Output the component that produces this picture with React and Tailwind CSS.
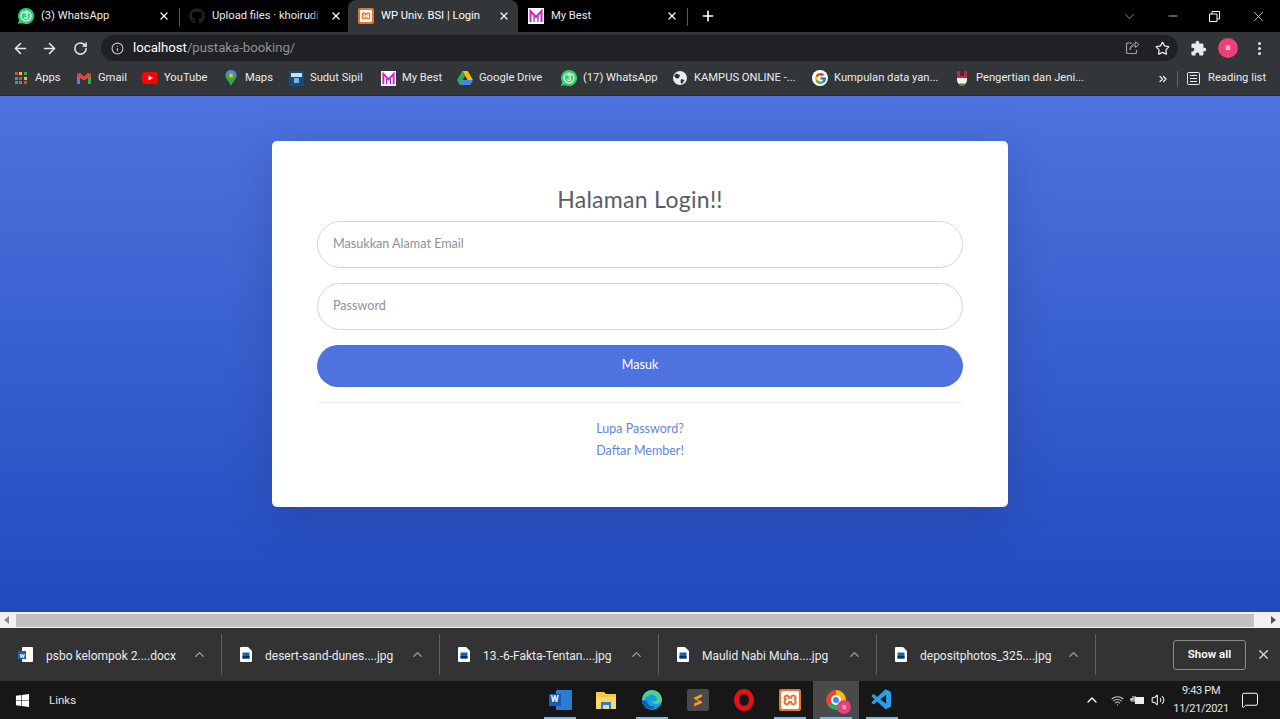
import { ArrowLeft, ArrowRight, RotateCw, Info, Star, X, Plus, ChevronDown, ChevronUp, Minus, ChevronsRight, Wifi, Volume2, MessageSquare } from "lucide-react";
import { FaGithub, FaWindows } from "react-icons/fa";
import { FcGoogle } from "react-icons/fc";
import { MdExtension } from "react-icons/md";
import { SiXampp } from "react-icons/si";
import { VscVscode } from "react-icons/vsc";

function WhatsappIcon({ label = "3" }) {
  return (
    <svg width="16" height="16" viewBox="0 0 16 16" className="shrink-0">
      <path d="M8 0a8 8 0 1 1-4 14.900L0 16l1.100-4A8 8 0 0 1 8 0" fill="#25d366" />
      <circle cx="8" cy="8" r="5" fill="none" stroke="#fff" strokeWidth="1.200" />
      <text x="8" y="11" textAnchor="middle" fontSize="8.500" fontWeight="700" fill="#fff">{label}</text>
    </svg>
  );
}

function XamppIcon({ size = 16 }) {
  return (
    <span className="flex shrink-0 items-center justify-center rounded-[2px] bg-[#e5762f] text-white" style={{ width: size, height: size }}>
      <SiXampp size={size - 4} />
    </span>
  );
}

function MyBestIcon({ size = 16 }) {
  return (
    <svg width={size} height={size} viewBox="0 0 16 16" className="shrink-0">
      <rect width="16" height="16" fill="#fff" />
      <path d="M2.500 14V3L8 9l5.500-6v11" fill="none" stroke="#d81fc4" strokeWidth="2" />
      <path d="M6 14V8M10 14V8" stroke="#7b2cbf" strokeWidth="1.200" />
    </svg>
  );
}

function FileIcon() {
  return (
    <svg width="12" height="15" viewBox="0 0 12 15" className="shrink-0">
      <path d="M0 1a1 1 0 0 1 1-1h7l4 4v10a1 1 0 0 1-1 1H1a1 1 0 0 1-1-1z" fill="#fff" />
      <rect x="2.500" y="5.500" width="7" height="6" fill="#1a62b8" />
      <rect x="2.500" y="9" width="7" height="2.500" fill="#0b2f6b" />
    </svg>
  );
}

function AppsIcon() {
  const colors = ["#ea4335", "#fbbc05", "#34a853", "#4285f4", "#ea4335", "#fbbc05", "#34a853", "#4285f4", "#ea4335"];
  return (
    <span className="grid h-3 w-3 shrink-0 grid-cols-3 gap-[1px]">
      {colors.map((c, i) => (
        <span key={i} className="h-[3px] w-[3px]" style={{ background: c }} />
      ))}
    </span>
  );
}

const bookmarks = [
  { label: "Apps", icon: <AppsIcon />, w: "w-[63px]" },
  {
    label: "Gmail",
    w: "w-[66px]",
    icon: (
      <svg width="14" height="12" viewBox="0 0 14 12" className="shrink-0">
        <path d="M0 2v10h3V5z" fill="#4285f4" />
        <path d="M14 2v10h-3V5z" fill="#34a853" />
        <path d="M0 1.500 3 1l4 3.500L11 1l3 .5V4L7 8.500 0 4z" fill="#ea4335" />
      </svg>
    ),
  },
  {
    label: "YouTube",
    w: "w-[81px]",
    icon: (
      <svg width="16" height="12" viewBox="0 0 16 12" className="shrink-0">
        <rect width="16" height="12" rx="3" fill="#f00" />
        <path d="M6.500 3.500v5L11 6z" fill="#fff" />
      </svg>
    ),
  },
  {
    label: "Maps",
    w: "w-[65px]",
    icon: (
      <svg width="12" height="16" viewBox="0 0 12 16" className="shrink-0">
        <path d="M6 0a5.500 5.500 0 0 0-5.500 5.500C.5 9 4.500 12 6 16c1.500-4 5.500-7 5.500-10.500A5.500 5.500 0 0 0 6 0" fill="#34a853" />
        <path d="M6 0a5.500 5.500 0 0 1 5.500 5.500L1 4A5.500 5.500 0 0 1 6 0" fill="#4285f4" />
        <circle cx="6" cy="5.500" r="2" fill="#fbbc05" />
      </svg>
    ),
  },
  {
    label: "Sudut Sipil",
    w: "w-[92px]",
    icon: (
      <svg width="15" height="15" viewBox="0 0 15 15" className="shrink-0">
        <rect width="15" height="15" fill="#0f4c8a" />
        <rect x="2" y="2" width="11" height="4" fill="#cfe0ee" />
        <rect x="5" y="7" width="5" height="5" fill="#7fb2d8" />
      </svg>
    ),
  },
  { label: "My Best", icon: <MyBestIcon size={15} />, w: "w-[77px]" },
  {
    label: "Google Drive",
    w: "w-[104px]",
    icon: (
      <svg width="16" height="14" viewBox="0 0 16 14" className="shrink-0">
        <path d="M5.300 0h5.400l5.300 9h-5.400z" fill="#fbbc05" />
        <path d="M5.300 0 0 9l2.700 5 5.300-9z" fill="#34a853" />
        <path d="M5.300 9H16l-2.700 5H2.700z" fill="#4285f4" />
      </svg>
    ),
  },
  { label: "(17) WhatsApp", icon: <WhatsappIcon />, w: "w-[111px]" },
  {
    label: "KAMPUS ONLINE -...",
    w: "w-[140px]",
    icon: (
      <svg width="14" height="14" viewBox="0 0 14 14" className="shrink-0">
        <circle cx="7" cy="7" r="7" fill="#e8eaed" />
        <path d="M3 2.500 7 4 6 7 3.500 7.500 1 5zM8 8l3.500 1L9 13 7.500 11z" fill="#303134" />
      </svg>
    ),
  },
  { label: "Kumpulan data yan...", icon: <span className="flex h-4 w-4 shrink-0 items-center justify-center rounded-full bg-white"><FcGoogle size={13} /></span>, w: "w-[142px]" },
  {
    label: "Pengertian dan Jeni...",
    w: "w-[203px]",
    icon: (
      <svg width="14" height="15" viewBox="0 0 14 15" className="shrink-0">
        <path d="M2 0h3v5h4V0h3v9a5 5 0 0 1-10 0z" fill="#d81b3c" />
        <path d="M2 7h10v2a5 5 0 0 1-10 0z" fill="#f1f3ef" />
        <path d="M4.500 12.500h5V15h-5z" fill="#3d8b4f" />
      </svg>
    ),
  },
];

const downloads = [
  { name: "psbo kelompok 2....docx", w: "w-[222px]", word: true },
  { name: "desert-sand-dunes....jpg", w: "w-[218px]" },
  { name: "13.-6-Fakta-Tentan....jpg", w: "w-[219px]" },
  { name: "Maulid Nabi Muha....jpg", w: "w-[218px]" },
  { name: "depositphotos_325....jpg", w: "w-[219px]" },
];

function Tab({ icon, title, active, sep, box, fade }) {
  return (
    <div className={`relative flex h-[32px] shrink-0 items-center ${box} ${active ? "rounded-t-lg bg-[#323639] text-white" : "text-[#e8eaed]"}`}>
      {icon}
      <span className="ml-[7px] min-w-0 flex-1 whitespace-nowrap text-[11.2px]">{title}</span>
      {fade && <span className="absolute right-[26px] top-2 h-4 w-3 bg-gradient-to-r from-transparent to-black" />}
      <X size={12} strokeWidth={2.5} className="shrink-0 text-white" />
      {sep && <span className="absolute right-0 top-[8px] h-[18px] w-px bg-[#5a5a5a]" />}
    </div>
  );
}

function TaskIcon({ children, active, open }) {
  return (
    <div className={`relative flex h-[38px] w-[46px] items-center justify-center ${active ? "bg-[#4a4a4a]" : ""}`}>
      {children}
      {open && <span className="absolute bottom-0 left-[7px] h-[2px] w-[32px] bg-[#76b9ed]" />}
    </div>
  );
}

export default function App() {
  return (
    <div className="flex h-[719px] w-[1280px] flex-col overflow-hidden bg-black font-['Roboto',sans-serif]">
      {/* tab strip */}
      <div className="flex h-[32px] shrink-0 items-center bg-black pl-[9px]">
        <Tab box="w-[171px] pl-[9px] pr-[10px]" sep title="(3) WhatsApp" icon={<WhatsappIcon />} />
        <Tab box="w-[168px] pl-[9px] pr-[6px]" fade title="Upload files · khoirudi" icon={<FaGithub size={16} className="shrink-0 text-[#222]" />} />
        <Tab box="w-[170px] pl-[10px] pr-[8px]" active title="WP Univ. BSI | Login" icon={<XamppIcon />} />
        <Tab box="w-[170px] pl-[10px] pr-[10px]" sep title="My Best" icon={<MyBestIcon />} />
        <Plus size={16} strokeWidth={2.5} className="ml-[12px] text-white" />
        <div className="ml-auto flex items-center">
          <ChevronDown size={15} strokeWidth={1} className="mr-[29px] text-[#ddd]" />
          <Minus size={14} strokeWidth={1.2} className="mr-[29px] text-white" />
          <svg width="11" height="11" viewBox="0 0 11 11" className="mr-[30px]">
            <path d="M.5 3h7.500v7.500H.500zM3 3V.5h7.500V8H8" fill="none" stroke="#fff" />
          </svg>
          <X size={17} strokeWidth={1} className="mr-[13px] text-white" />
        </div>
      </div>

      {/* address bar */}
      <div className="flex h-[32px] shrink-0 items-center bg-[#323639] pl-[12px]">
        <ArrowLeft size={17} strokeWidth={2.2} className="text-[#e8eaed]" />
        <ArrowRight size={17} strokeWidth={2.2} className="ml-[12px] text-[#e8eaed]" />
        <RotateCw size={15} strokeWidth={2.4} className="ml-[15px] text-[#e8eaed]" />
        <div className="ml-[13px] flex h-[26px] w-[1077px] items-center rounded-full bg-[#202124] pl-[10px] pr-[8px]">
          <Info size={13} className="text-[#c4c7c5]" />
          <span className="ml-[9px] text-[13.2px] text-white">localhost</span>
          <span className="text-[13.2px] text-[#8f9296]">/pustaka-booking/</span>
          <svg width="15" height="14" viewBox="0 0 15 14" className="ml-auto">
            <path d="M7 2H2.500a1 1 0 0 0-1 1v8.500a1 1 0 0 0 1 1h8a1 1 0 0 0 1-1V9" fill="none" stroke="#9aa0a6" strokeWidth="1.200" />
            <path d="M5 9c.5-3 3-4.500 5.500-4.500V6.500L14 3.500 10.500.8v2C7 2.800 5 5.500 5 9z" fill="none" stroke="#9aa0a6" />
          </svg>
          <Star size={15} className="ml-[15px] text-[#e8eaed]" />
        </div>
        <MdExtension size={17} className="ml-[12px] text-[#e8eaed]" />
        <span className="ml-[11px] flex h-[20px] w-[20px] items-center justify-center rounded-full bg-[#ec407a] text-[9px] font-semibold text-white">a</span>
        <span className="ml-[20px] flex flex-col gap-[2px]">
          <span className="h-[3px] w-[3px] rounded-full bg-[#e8eaed]" />
          <span className="h-[3px] w-[3px] rounded-full bg-[#e8eaed]" />
          <span className="h-[3px] w-[3px] rounded-full bg-[#e8eaed]" />
        </span>
      </div>

      {/* bookmarks */}
      <div className="flex h-[32px] shrink-0 items-center border-b border-[#2a2a2a] bg-[#323639] pb-[2px] pl-[13px] text-[11.2px] text-[#e8eaed]">
        {bookmarks.map((b) => (
          <div key={b.label} className={`flex shrink-0 items-center gap-[6px] whitespace-nowrap ${b.w}`}>
            <span className="flex w-[16px] shrink-0 justify-center">{b.icon}</span>
            <span>{b.label}</span>
          </div>
        ))}
        <ChevronsRight size={12} strokeWidth={2.5} className="text-[#e8eaed]" />
        <span className="ml-[8px] h-[16px] w-px bg-[#5f6368]" />
        <svg width="13" height="13" viewBox="0 0 13 13" className="ml-[9px]">
          <rect x=".5" y=".5" width="12" height="12" rx="1" fill="none" stroke="#e8eaed" />
          <path d="M3 3.500h7M3 6.500h7M3 9.500h7" stroke="#e8eaed" />
        </svg>
        <span className="ml-[8px] whitespace-nowrap">Reading list</span>
      </div>

      {/* page */}
      <div className="flex h-[516px] shrink-0 justify-center bg-gradient-to-b from-[#4e73df] to-[#224abe] pt-[45px]">
        <div className="h-[366px] w-[736px] rounded-[5px] bg-white px-[45px] pt-[45px] font-['Lato',sans-serif] shadow-[0_8px_40px_rgba(28,40,90,0.25)]">
          <h1 className="text-center text-[23px] leading-[26px] tracking-[0.3px] text-[#5a5c69]">Halaman Login!!</h1>
          <input readOnly placeholder="Masukkan Alamat Email" className="mt-[9px] block h-[47px] w-full rounded-full border border-[#d1d3e2] bg-white px-[15px] pb-[3px] text-[12.6px] outline-none placeholder:text-[#8e909c]" />
          <input readOnly placeholder="Password" className="mt-[15px] block h-[47px] w-full rounded-full border border-[#d1d3e2] bg-white px-[15px] pb-[3px] text-[12.6px] outline-none placeholder:text-[#8e909c]" />
          <button className="mt-[15px] block h-[42px] w-full rounded-full bg-[#4e73df] pb-[1px] text-[12.6px] text-white">Masuk</button>
          <hr className="mt-[15px] border-[#eaecf4]" />
          <div className="mt-[17px] flex flex-col items-center gap-[4px] text-[12.5px] leading-[18px] text-[#6484dd]">
            <a>Lupa Password?</a>
            <a>Daftar Member!</a>
          </div>
        </div>
      </div>

      {/* horizontal scrollbar */}
      <div className="flex h-[16px] shrink-0 items-center bg-[#f1f1f1]">
        <span className="ml-[4px] h-0 w-0 border-y-[4px] border-r-[5px] border-y-transparent border-r-[#8a8a8a]" />
        <span className="ml-[7px] h-[13px] w-[1238px] bg-[#c1c1c1]" />
        <span className="ml-[17px] h-0 w-0 border-y-[4px] border-l-[5px] border-y-transparent border-l-[#505050]" />
      </div>

      {/* downloads */}
      <div className="flex h-[53px] shrink-0 items-center bg-[#333333] text-[12px] text-[#e8eaed]">
        {downloads.map((d) => (
          <div key={d.name} className={`flex h-[41px] shrink-0 items-center border-r border-[#5f5f5f] pl-[18px] ${d.w}`}>
            {d.word ? (
              <span className="relative flex h-[15px] w-[15px] shrink-0 justify-end">
                <span className="h-[15px] w-[11px] rounded-[1px] bg-white" />
                <span className="absolute left-0 top-[4px] flex h-[8px] w-[8px] items-center justify-center bg-[#185abd] text-[6px] font-bold text-white">W</span>
              </span>
            ) : (
              <FileIcon />
            )}
            <span className="ml-[13px] mt-[2px] whitespace-nowrap">{d.name}</span>
            <ChevronUp size={15} className="ml-auto mr-[14px] text-[#a5a5a5]" />
          </div>
        ))}
        <button className="ml-[77px] h-[30px] w-[73px] rounded-[3px] border border-[#8d8d8d] text-[11.5px] font-semibold text-white">Show all</button>
        <X size={15} className="ml-[10px] text-[#dcdcdc]" />
      </div>

      {/* taskbar */}
      <div className="flex h-[38px] shrink-0 items-center bg-[#171717] text-[#e4e4e4]">
        <FaWindows size={15} className="ml-[15px] text-white" />
        <span className="ml-[19px] mt-[1px] text-[11.5px]">Links</span>
        <div className="ml-[461px] flex">
          <TaskIcon open>
            <span className="relative flex h-[20px] w-[23px]">
              <span className="absolute right-0 h-[20px] w-[16px] rounded-[1px] bg-[#2b7cd3]" />
              <span className="absolute left-0 top-[4px] flex h-[12px] w-[12px] items-center justify-center bg-[#185abd] text-[9px] font-bold text-white">W</span>
            </span>
          </TaskIcon>
          <TaskIcon>
            <svg width="20" height="18" viewBox="0 0 20 18">
              <path d="M0 1h8l2 2h10v15H0z" fill="#f8c648" />
              <path d="M0 6h20v12H0z" fill="#fbd66a" />
              <path d="M5 11h10v7h-2v-4H7v4H5z" fill="#2b7cd3" />
            </svg>
          </TaskIcon>
          <TaskIcon open>
            <svg width="20" height="20" viewBox="0 0 20 20">
              <circle cx="10" cy="10" r="10" fill="#1b9de2" />
              <path d="M0 10a10 10 0 0 1 20 0c0 3-3 4-6 4s-4-1-4-3c3 1 5 0 5-2S12 4 8 5 2 8 2 14z" fill="#52cf8f" />
              <path d="M5 11c0 4 4 6 8 5l-2 3c-6 0-11-3-11-9z" fill="#0f5fb0" />
            </svg>
          </TaskIcon>
          <TaskIcon>
            <span className="flex h-[22px] w-[22px] items-center justify-center rounded-[2px] bg-[#4a4a4a]">
              <svg width="10" height="14" viewBox="0 0 10 14">
                <path d="M1 4.500 9 1v3L4 6.200 9 8.500V10l-8 3.500v-3L6 8.300 1 6z" fill="#f79a1f" />
              </svg>
            </span>
          </TaskIcon>
          <TaskIcon>
            <span className="h-[22px] w-[20px] rounded-[50%] border-[5px] border-[#e3121c]" />
          </TaskIcon>
          <TaskIcon open>
            <XamppIcon size={22} />
          </TaskIcon>
          <TaskIcon active open>
            <span className="relative block h-[20px] w-[20px] rounded-full bg-[conic-gradient(#fbbc05_0_33%,#34a853_33%_66%,#ea4335_66%_100%)]">
              <span className="absolute left-[5px] top-[5px] h-[10px] w-[10px] rounded-full border-2 border-white bg-[#4285f4]" />
              <span className="absolute -bottom-[4px] -right-[5px] flex h-[14px] w-[14px] items-center justify-center rounded-full bg-[#ec407a] text-[7px] text-white">a</span>
            </span>
          </TaskIcon>
          <TaskIcon open>
            <VscVscode size={24} className="text-[#2a9fe8]" />
          </TaskIcon>
        </div>
        <ChevronUp size={16} className="ml-[179px] text-white" />
        <Wifi size={13} className="ml-[11px] text-[#ccc]" />
        <svg width="15" height="11" viewBox="0 0 15 11" className="ml-[6px]">
          <path d="M0 4h3V1M5 1v3M1 4v2h4V4z" stroke="#eee" fill="none" />
          <rect x="5" y="2" width="9" height="7" fill="#eee" />
        </svg>
        <Volume2 size={14} className="ml-[6px] text-[#ddd]" />
        <div className="ml-[6px] flex w-[60px] flex-col items-center text-[11px] leading-[18px] tracking-[-0.3px]">
          <span>9:43 PM</span>
          <span>11/21/2021</span>
        </div>
        <MessageSquare size={18} strokeWidth={1.3} className="ml-[10px] text-white" />
      </div>
    </div>
  );
}
